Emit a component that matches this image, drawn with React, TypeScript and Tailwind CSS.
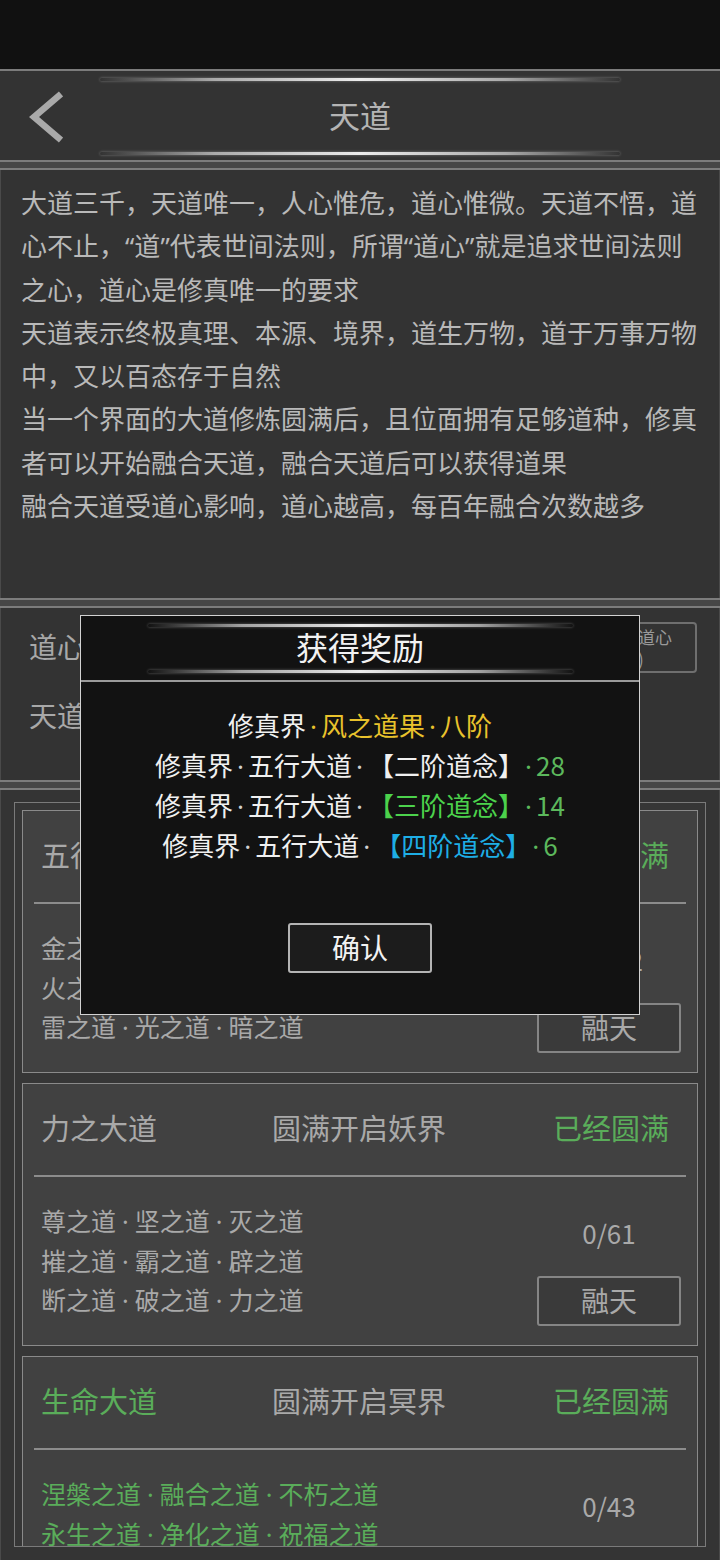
import React from "react";

const GLOW =
  "h-[3px] rounded-full bg-[linear-gradient(90deg,rgba(210,210,210,0)_0%,rgba(210,210,210,0.75)_22%,#ececec_50%,rgba(210,210,210,0.75)_78%,rgba(210,210,210,0)_100%)] shadow-[0_0_3px_rgba(255,255,255,0.35)]";

function Sep() {
  return <div className="h-[10px] shrink-0 border-y-2 border-[#7c7c7c] bg-[#464646]" />;
}

function Q({ children }: { children: React.ReactNode }) {
  return <span className="font-['Noto_Sans',sans-serif]">{children}</span>;
}

function Dot({ className }: { className?: string }) {
  return <span className={"font-['Noto_Sans',sans-serif] leading-none " + (className ?? "px-[6px]")}>·</span>;
}

function DotLine({ text }: { text: string }) {
  const parts = text.split("·");
  return (
    <div className="h-[39.5px]">
      {parts.map((p, i) => (
        <React.Fragment key={i}>
          {i > 0 && <Dot />}
          {p}
        </React.Fragment>
      ))}
    </div>
  );
}

type CardProps = {
  title: string;
  titleGreen?: boolean;
  mid: string;
  lines: string[];
  linesGreen?: boolean;
  count: string;
  showButton?: boolean;
};

function Card({ title, titleGreen, mid, lines, linesGreen, count, showButton = true }: CardProps) {
  return (
    <div className="h-[263px] shrink-0 border border-[#8a8a8a] bg-[#414141] flex flex-col">
      <div className="h-[91px] shrink-0 grid grid-cols-[1fr_auto_1fr] items-center pl-[18px] pr-[20px] pb-[4px] text-[29px] leading-none">
        <span className={titleGreen ? "text-[#5aad5a]" : "text-[#a9a9a9]"}>{title}</span>
        <span className="text-[#a9a9a9]">{mid}</span>
        <span className="justify-self-end mr-[8px] text-[#5aad5a]">已经圆满</span>
      </div>
      <div className="mx-[11px] h-[2px] shrink-0 bg-[#8c8c8c]" />
      <div className="flex pt-[24px] pl-[18px] pr-[16px]">
        <div
          className={
            "flex-1 text-[25px] leading-[39.5px] whitespace-nowrap " +
            (linesGreen ? "text-[#5aad5a]" : "text-[#a9a9a9]")
          }
        >
          {lines.map((l, i) => (
            <DotLine key={i} text={l} />
          ))}
        </div>
        <div className="w-[144px] flex flex-col items-center">
          <div className="mt-[12px] h-[40px] leading-[40px] text-[26px] text-[#a9a9a9]">{count}</div>
          {showButton && (
            <div className="mt-[23px] w-[144px] h-[50px] flex items-center justify-center pb-[2px] border-2 border-[#858585] rounded-[3px] bg-[#3a3a3a] text-[28px] leading-none text-[#a9a9a9]">
              融天
            </div>
          )}
        </div>
      </div>
    </div>
  );
}

export default function App() {
  return (
    <div className="relative w-[720px] h-[1560px] overflow-hidden bg-[#333333] flex flex-col font-['Noto_Sans_CJK_SC',sans-serif]">
      {/* status bar */}
      <div className="h-[69px] shrink-0 bg-[#111111]" />

      {/* header */}
      <div className="h-[91px] shrink-0 border-t-2 border-[#7c7c7c] bg-[#333333] flex flex-col pt-[7px] pb-[5px]">
        <div className={"w-[520px] mx-auto " + GLOW} />
        <div className="flex-1 grid grid-cols-[1fr_auto_1fr] items-center">
          <div className="pl-[29px] flex items-center">
            <svg width="34" height="52" viewBox="0 0 34 52">
              <polyline points="32,3 5,26 32,49" fill="none" stroke="#a9a9a9" strokeWidth="6.5" strokeLinejoin="miter" />
            </svg>
          </div>
          <div className="pb-[4px] text-[31px] leading-none text-[#b4b4b4]">天道</div>
          <div />
        </div>
        <div className={"w-[520px] mx-auto " + GLOW} />
      </div>

      <Sep />

      {/* description */}
      <div className="h-[428px] shrink-0 border-x border-[#4a4a4a] pt-[10px] pl-[20px] text-[26px] leading-[43.3px] text-[#b9b9b9] whitespace-nowrap">
        <div>大道三千，天道唯一，人心惟危，道心惟微。天道不悟，道</div>
        <div className="h-[43.3px]">
          心不止，<Q>“</Q>道<Q>”</Q>代表世间法则，所谓<Q>“</Q>道心<Q>”</Q>就是追求世间法则
        </div>
        <div>之心，道心是修真唯一的要求</div>
        <div>天道表示终极真理、本源、境界，道生万物，道于万事万物</div>
        <div>中，又以百态存于自然</div>
        <div>当一个界面的大道修炼圆满后，且位面拥有足够道种，修真</div>
        <div>者可以开始融合天道，融合天道后可以获得道果</div>
        <div>融合天道受道心影响，道心越高，每百年融合次数越多</div>
      </div>

      <Sep />

      {/* stats */}
      <div className="h-[172px] shrink-0 border-x border-[#4a4a4a] flex flex-col pt-[14px] pl-[28px] pr-[22px] text-[28px] text-[#a8a8a8]">
        <div className="h-[51px] flex items-center justify-between">
          <span className="leading-none pb-[3px]">道心：36</span>
          <div className="w-[100px] h-[51px] border-2 border-[#6f6f6f] rounded-[4px] pl-[5px] flex flex-col justify-center text-[17px] leading-[22px] text-[#9a9a9a]">
            <span>提升道心</span>
            <span>(100)</span>
          </div>
        </div>
        <div className="mt-[23px] h-[40px] flex items-center pb-[3px] leading-none">天道：0/3</div>
      </div>

      <Sep />

      {/* list */}
      <div className="flex-1 border-x border-[#4a4a4a] bg-[#343434] pt-[12px] px-[13px]">
        <div className="h-[745px] border border-[#7a7a7a] bg-[#363636] p-[7px] overflow-hidden flex flex-col gap-[10px]">
          <Card
            title="五行大道"
            mid="圆满开启仙界"
            lines={["金之道·木之道·水之道", "火之道·土之道·风之道", "雷之道·光之道·暗之道"]}
            count="0/112"
          />
          <Card
            title="力之大道"
            mid="圆满开启妖界"
            lines={["尊之道·坚之道·灭之道", "摧之道·霸之道·辟之道", "断之道·破之道·力之道"]}
            count="0/61"
          />
          <Card
            title="生命大道"
            titleGreen
            mid="圆满开启冥界"
            lines={["涅槃之道·融合之道·不朽之道", "永生之道·净化之道·祝福之道"]}
            linesGreen
            count="0/43"
            showButton={false}
          />
        </div>
      </div>

      {/* reward modal */}
      <div className="absolute left-[80px] top-[615px] w-[560px] h-[400px] border border-[#d2d2d2] bg-[#121212] flex flex-col">
        <div className="h-[66px] shrink-0 border-b-2 border-[#9a9a9a] flex flex-col pt-[8px] pb-[7px]">
          <div className={"w-[425px] mx-auto " + GLOW} />
          <div className="flex-1 flex items-center justify-center pb-[5px] text-[32px] leading-none text-[#f2f2f2]">获得奖励</div>
          <div className={"w-[425px] mx-auto " + GLOW} />
        </div>
        <div className="pt-[23px] flex flex-col items-center text-[26px] leading-[40px] text-[#f0f0f0] whitespace-nowrap">
          <div className="h-[40px]">
            修真界
            <span className="text-[#e9c22c]">
              <Dot className="px-[4px]" />风之道果<Dot className="px-[4px]" />八阶
            </span>
          </div>
          <div className="h-[40px]">
            修真界<Dot className="px-[4px] text-[#d0d0d0]" />五行大道<Dot className="px-[4px] text-[#d0d0d0]" />
            <span className="ml-[14px] mr-[10px]">【二阶道念】</span>
            <span className="text-[#5cb85c]">
              <Dot className="px-[4px]" />28
            </span>
          </div>
          <div className="h-[40px]">
            修真界<Dot className="px-[4px] text-[#d0d0d0]" />五行大道<Dot className="px-[4px] text-[#d0d0d0]" />
            <span className="ml-[14px] mr-[10px] text-[#4cd24c]">【三阶道念】</span>
            <span className="text-[#5cb85c]">
              <Dot className="px-[4px]" />14
            </span>
          </div>
          <div className="h-[40px]">
            修真界<Dot className="px-[4px] text-[#d0d0d0]" />五行大道<Dot className="px-[4px] text-[#d0d0d0]" />
            <span className="ml-[14px] mr-[10px] text-[#1eaee6]">【四阶道念】</span>
            <span className="text-[#5cb85c]">
              <Dot className="px-[4px]" />6
            </span>
          </div>
          <div className="mt-[58px] w-[144px] h-[50px] flex items-center justify-center pb-[3px] border-2 border-[#b4b4b4] rounded-[3px] bg-[#1c1c1c] text-[28px] leading-none text-[#f2f2f2]">
            确认
          </div>
        </div>
      </div>
    </div>
  );
}
